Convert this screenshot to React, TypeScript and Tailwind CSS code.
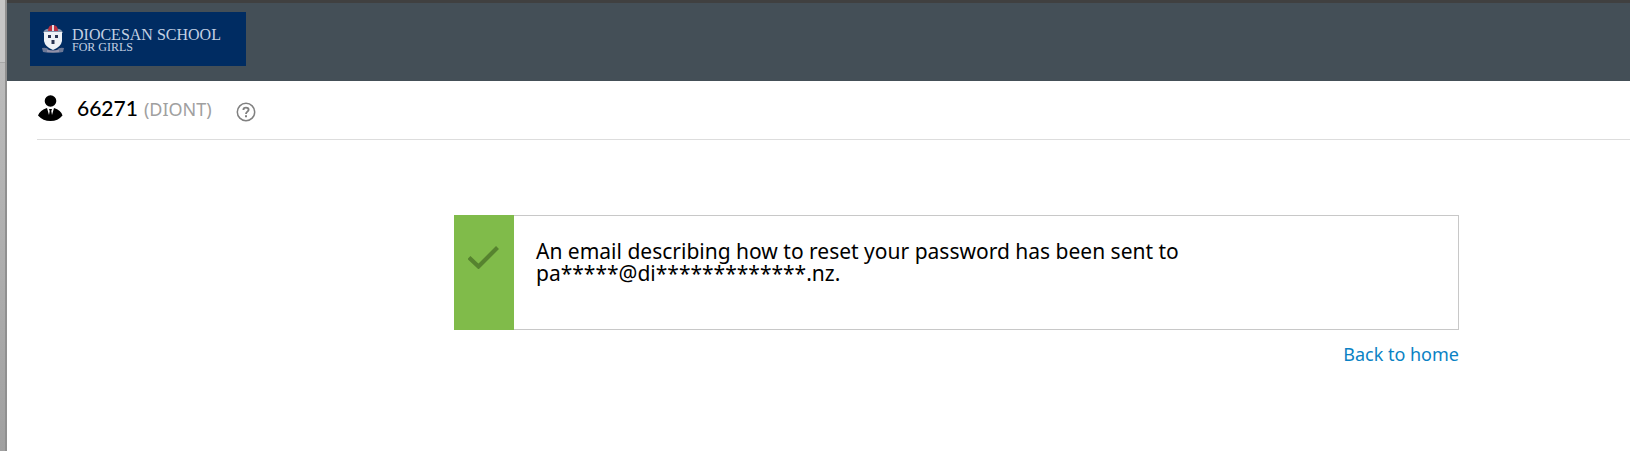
function SchoolCrest() {
  return (
    <svg viewBox="0 0 22 30" className="h-[30px] w-[22px] shrink-0" aria-hidden="true">
      <path d="M1 9 Q3 4 8 5 L14 5 Q19 4 21 9 L17 9 L5 9 Z" fill="#8494ae" />
      <path d="M6 7 Q6 1 11 1 Q16 1 16 7 Z" fill="#b9303f" />
      <path d="M10 1 H12 V7 H10 Z" fill="#e6dfe4" />
      <path d="M2 8 H20 V17 Q19 23 11 26 Q3 23 2 17 Z" fill="#eef2f6" />
      <path d="M6 11 H9 V14 H6 Z M13 11 H16 V14 H13 Z M9.5 16 H12.5 V20 H9.5 Z" fill="#2a3552" />
      <path d="M0 24 Q5 23 7 26 Q11 28 15 26 Q17 23 22 24 L21 28 Q11 30 1 28 Z" fill="#6c7896" />
      <path d="M5 27 H17" stroke="#b7a9bb" strokeWidth="1" />
    </svg>
  );
}

function UserIcon() {
  return (
    <svg viewBox="0 0 26 27" className="h-[27px] w-[26px] shrink-0" aria-hidden="true">
      <circle cx="13.5" cy="6" r="5.8" fill="#000" />
      <path d="M10 13 Q3 15 1 20.5 Q6 26 13.5 26 Q21 26 25.5 20.5 Q24 15 17 13 L15 20 L14.3 16 L15 14 H12 L12.7 16 L12 20 Z" fill="#000" />
    </svg>
  );
}

function HelpIcon() {
  return (
    <svg viewBox="0 0 20 20" className="h-5 w-5" fill="none" stroke="#808080" aria-hidden="true">
      <circle cx="10" cy="10" r="8.7" strokeWidth="1.5" />
      <path d="M7.4 7.9 C7.4 4.9 12.6 4.9 12.6 7.7 C12.6 9.6 10 9.7 10 12" strokeWidth="1.9" />
      <path d="M10 13.3 V15.3" strokeWidth="2" />
    </svg>
  );
}

function CheckIcon() {
  return (
    <svg viewBox="0 0 32 24" className="h-6 w-8" fill="none" aria-hidden="true">
      <path d="M1 12.5 L10.5 21.5 L29.5 2.5" stroke="#56832f" strokeWidth="4.2" />
    </svg>
  );
}

export default function App() {
  return (
    <div className="flex min-h-screen bg-white font-['Noto_Sans',sans-serif] text-black">
      {/* Edge of the page behind */}
      <div className="flex w-[7px] shrink-0 flex-col border-r-2 border-[#909090]">
        <div className="h-[63px] border-b border-[#a8a8a8] bg-[#c6c6c6]" />
        <div className="flex-1 bg-linear-to-b from-[#bcbcbc] to-[#a0a0a0]" />
      </div>

      <div className="min-w-0 flex-1">
        <header className="border-t-3 border-[#404040] bg-[#444f57] px-[23px] pt-[9px] pb-[15px]">
          <div className="flex h-[54px] w-[216px] items-center gap-2 bg-[#002c62] pl-3 font-['Liberation_Serif',serif] text-[#c3d0e2]">
            <SchoolCrest />
            <div className="whitespace-nowrap pt-1">
              <p className="text-[16px] leading-3">DIOCESAN SCHOOL</p>
              <p className="text-[12px] leading-3">FOR GIRLS</p>
            </div>
          </div>
        </header>

        <main className="pl-[30px]">
          <div className="flex h-[59px] items-center border-b border-[#dddddd] pb-1">
            <UserIcon />
            <div className="ml-[14px] flex items-baseline gap-[6px]">
              <h1 className="font-['Lato',sans-serif] text-[21px] font-medium">66271</h1>
              <span className="text-[18px] text-[#a0a0a0]">(DIONT)</span>
            </div>
            <button type="button" aria-label="Help" className="ml-6 pt-2">
              <HelpIcon />
            </button>
          </div>

          <section className="mt-[75px] mr-[171px] ml-[417px]">
            <div role="status" className="flex min-h-[115px] border border-l-0 border-[#c8c8c8]">
              <div className="-my-px flex w-[60px] shrink-0 justify-center bg-[#80bb4a] pt-[30px]">
                <CheckIcon />
              </div>
              <p className="px-[22px] pt-6 text-[21px] leading-[22px]">
                An email describing how to reset your password has been sent to
                <br />
                pa*****@di*************.nz.
              </p>
            </div>
            <div className="mt-3 text-right">
              <a href="#" className="text-[18px] leading-6 text-[#0a82c4]">Back to home</a>
            </div>
          </section>
        </main>
      </div>
    </div>
  );
}
